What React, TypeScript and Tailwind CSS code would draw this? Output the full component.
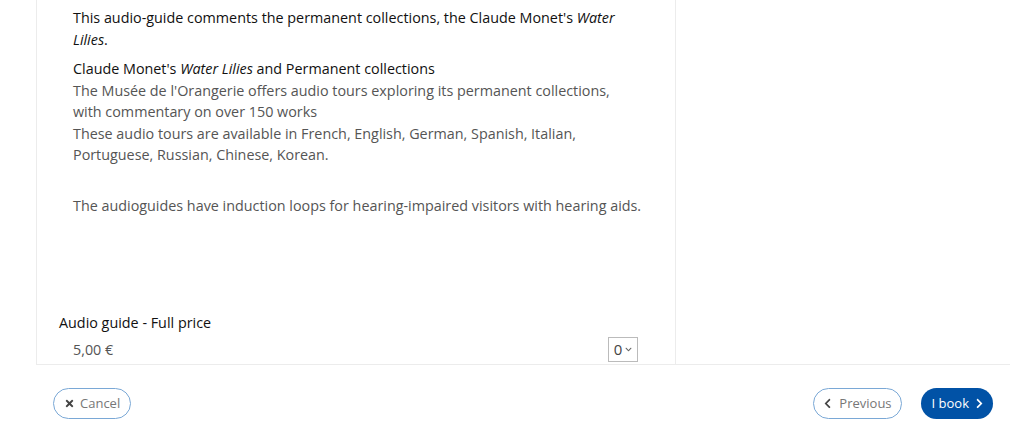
import { FaTimes, FaChevronLeft, FaChevronRight, FaChevronDown } from "react-icons/fa";

export default function App() {
  return (
    <div className="w-[1024px] h-[425px] bg-white overflow-hidden font-['Open_Sans',sans-serif] text-[14.35px] leading-[21.5px]">
      <div className="ml-[36px] w-[974px]">
        {/* Panneau description + tarif */}
        <div className="flex border-b border-[#ececec]">
          <div className="w-[640px] h-[364px] border-l border-r border-[#ececec] flex flex-col">
            <div className="pl-[36px] pr-[48px] pt-[7px]">
              <p className="text-[#111]">
                This audio-guide comments the permanent collections, the Claude Monet's <em>Water Lilies</em>.
              </p>
              <p className="text-[#111] mt-[8px]">
                Claude Monet's <em>Water Lilies</em> and Permanent collections
              </p>
              <p className="text-[#555]">
                The Musée de l'Orangerie offers audio tours exploring its permanent collections, with commentary on over 150 works
                <br />
                These audio tours are available in French, English, German, Spanish, Italian, Portuguese, Russian, Chinese, Korean.
              </p>
              <p className="text-[#555] mt-[29px] mr-[-20px]">
                The audioguides have induction loops for hearing-impaired visitors with hearing aids.
              </p>
            </div>

            <div className="mt-auto pl-[22px] pr-[37px] pb-[2px]">
              <div className="text-[#111] leading-[22px]">Audio guide - Full price</div>
              <div className="flex items-center justify-between pl-[14px] mt-[3px]">
                <span className="text-[#555]">5,00 €</span>
                <div className="w-[30px] h-[25px] border border-[#bbb] flex items-center justify-center gap-[3px] text-[#444]">
                  <span className="text-[15px] leading-none">0</span>
                  <FaChevronDown className="w-[7px] h-[7px] text-[#666]" />
                </div>
              </div>
            </div>
          </div>
          <div className="flex-1" />
        </div>

        {/* Boutons */}
        <div className="flex items-center justify-between px-[17px] pt-[23px]">
          <button className="h-[31px] pl-[10px] pr-[10px] rounded-full border border-[#7aa8d6] text-[#777] text-[13px] flex items-center gap-[5px]">
            <FaTimes size={11} className="shrink-0 text-[#444]" />
            Cancel
          </button>
          <div className="flex items-center gap-[19px]">
            <button className="h-[31px] pl-[8px] pr-[9px] rounded-full border border-[#7aa8d6] text-[#777] text-[13px] flex items-center gap-[6px]">
              <FaChevronLeft size={11} className="shrink-0 text-[#444]" />
              Previous
            </button>
            <button className="h-[31px] pl-[11px] pr-[8px] rounded-full bg-[#0152a6] text-white text-[13px] flex items-center gap-[5px]">
              I book
              <FaChevronRight size={11} className="shrink-0" />
            </button>
          </div>
        </div>
      </div>
    </div>
  );
}
